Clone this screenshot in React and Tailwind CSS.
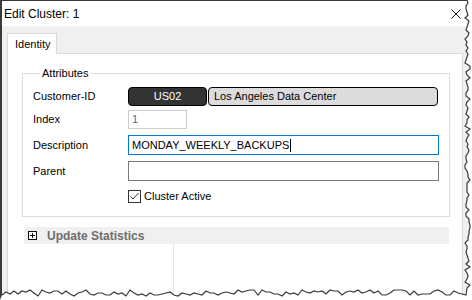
import React from 'react';

const font = { fontFamily: '"Liberation Sans", Arial, sans-serif' };

// jagged "torn paper" edge, right side then bottom
function tornPoints() {
  let seed = 7;
  const rnd = () => {
    seed = (seed * 9301 + 49297) % 233280;
    return seed / 233280;
  };
  const pts = [];
  for (let y = 0; y <= 290; y += 3) {
    pts.push([465 + Math.round(rnd() * 5), y]);
  }
  for (let x = 466; x >= 0; x -= 4) {
    pts.push([x, 290 + Math.round(rnd() * 6)]);
  }
  return pts;
}

function TornEdge() {
  const pts = tornPoints();
  const line = pts.map((p) => p.join(',')).join(' ');
  const fill = `${line} 0,300 472,300 472,0`;
  return (
    <svg className="absolute inset-0 pointer-events-none" width="472" height="300">
      <polygon points={fill} fill="#ffffff" />
      <polyline points={line} fill="none" stroke="#3a3a3a" strokeWidth="1.2" />
    </svg>
  );
}

function Row({ label, mt, h, children }) {
  return (
    <div className={`flex items-center ${mt} ${h}`}>
      <div className="w-[95px] text-[11px] text-black leading-none">{label}</div>
      {children}
    </div>
  );
}

export default function App() {
  return (
    <div className="relative w-[472px] h-[300px] bg-white overflow-hidden" style={font}>
      <div className="flex flex-col h-full border-l-2 border-t border-[#3a3a3a]">
        {/* title bar */}
        <div className="h-[25px] bg-white flex items-center justify-between pl-[2px] pr-[10px] shrink-0">
          <span className="text-[12px] text-black">Edit Cluster: 1</span>
          <svg width="10" height="10" viewBox="0 0 10 10" className="mr-[1px]">
            <path d="M0.5 0.5 L9.5 9.5 M9.5 0.5 L0.5 9.5" stroke="#111" strokeWidth="1" />
          </svg>
        </div>

        {/* body */}
        <div className="flex-1 bg-[#f0f0f0] pl-[5px] pt-[7px] pr-[8px] flex flex-col">
          <div className="flex">
            <div className="w-[50px] h-[21px] bg-white border border-b-0 border-[#d9d9d9] text-[11px] text-black flex items-center pl-[7px] -mb-px relative z-10">
              Identity
            </div>
          </div>
          <div className="w-[456px] flex-1 bg-white border border-[#d9d9d9] border-b-0 pt-[12px] pl-[14px] flex flex-col">
            <fieldset className="w-[428px] border border-[#dcdcdc] pl-[10px] pr-[9px] pb-[13px]">
              <legend className="ml-[7px] px-[2px] text-[11px] leading-[14px] text-black">Attributes</legend>
              <div className="pt-[7px]">
                <Row label="Customer-ID" mt="" h="h-[19px]">
                  <div className="flex h-[19px]">
                    <div className="w-[79px] h-full bg-[#333333] border border-black rounded-[4px] text-white text-[11px] flex items-center justify-center">
                      US02
                    </div>
                    <div className="w-[230px] h-full ml-[1px] bg-[#dcdcdc] border border-black rounded-[4px] text-[11px] text-black flex items-center pl-[5px]">
                      Los Angeles Data Center
                    </div>
                  </div>
                </Row>
                <Row label="Index" mt="mt-[4px]" h="h-[19px]">
                  <div className="w-[59px] h-[19px] border border-[#cccccc] bg-white text-[11px] text-[#6d6284] flex items-center pl-[3px]">
                    1
                  </div>
                </Row>
                <Row label="Description" mt="mt-[6px]" h="h-[20px]">
                  <div className="w-[311px] h-[20px] border border-[#0078d7] bg-white text-[11px] text-black flex items-center pl-[3px]">
                    MONDAY_WEEKLY_BACKUPS
                    <span className="inline-block w-px h-[13px] bg-black ml-px" />
                  </div>
                </Row>
                <Row label="Parent" mt="mt-[6px]" h="h-[20px]">
                  <div className="w-[311px] h-[20px] border border-[#7a7a7a] bg-white" />
                </Row>
                <div className="flex items-center mt-[9px] pl-[95px] h-[13px]">
                  <svg width="13" height="13" viewBox="0 0 13 13">
                    <rect x="0.5" y="0.5" width="12" height="12" fill="#fff" stroke="#333" />
                    <path d="M2.5 6.5 L5 9 L10.5 3" fill="none" stroke="#333" strokeWidth="1" />
                  </svg>
                  <span className="ml-[3px] text-[11px] text-black leading-none">Cluster Active</span>
                </div>
              </div>
            </fieldset>

            <div className="mt-[10px] ml-[2px] w-[425px] h-[17px] bg-[#f0f0f0] flex items-center pl-[4px]">
              <svg width="9" height="9" viewBox="0 0 9 9">
                <rect x="0.5" y="0.5" width="8" height="8" fill="#fff" stroke="#111" />
                <path d="M2 4.5 H7 M4.5 2 V7" stroke="#111" strokeWidth="1" />
              </svg>
              <span className="ml-[10px] text-[12px] font-bold text-[#6d6d6d] leading-none">Update Statistics</span>
            </div>
            <div className="flex-1 flex">
              <div className="w-[152px] border-r border-[#e5e5e5]" />
            </div>
          </div>
        </div>
      </div>
      <TornEdge />
    </div>
  );
}
